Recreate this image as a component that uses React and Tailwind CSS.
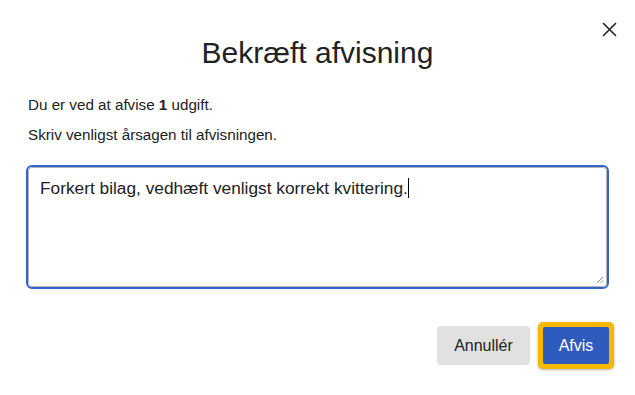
export default function App() {
  return (
    <div className="relative w-[635px] h-[395px] bg-white text-[#222] font-['Liberation_Sans',Arial,sans-serif]">
      <button className="absolute right-[18px] top-[21px] w-[16px] h-[16px] flex items-center justify-center">
        <svg width="15" height="15" viewBox="0 0 15 15">
          <path d="M1.5 1.5 L13.5 13.5 M13.5 1.5 L1.5 13.5" stroke="#222" strokeWidth="1.6" strokeLinecap="round" />
        </svg>
      </button>

      <h1 className="pt-[36px] text-center text-[30px] leading-[34px]">Bekræft afvisning</h1>

      <div className="px-[28px] mt-[20px] text-[15.2px] leading-[30px]">
        <p>Du er ved at afvise <b>1</b> udgift.</p>
        <p>Skriv venligst årsagen til afvisningen.</p>
      </div>

      <div className="mx-[26px] mt-[15px] h-[124px] rounded-[6px] border-2 border-[#3563c9]">
        <div className="relative h-full rounded-[4px] border border-[#b5b5b5] px-[11px] py-[9px] text-[17.3px] leading-[22px]">
          <span>Forkert bilag, vedhæft venligst korrekt kvittering.</span>
          <span className="inline-block w-px h-[20px] bg-black align-[-4px]" />
          <svg className="absolute right-[2px] bottom-[2px]" width="8" height="8" viewBox="0 0 8 8">
            <path d="M7 1 L1 7 M7 4.5 L4.5 7" stroke="#888" strokeWidth="1" />
          </svg>
        </div>
      </div>

      <div className="flex justify-end items-center gap-[8px] mt-[33px] pr-[21px]">
        <button className="w-[93px] h-[39px] rounded-[4px] bg-[#e1e1e1] text-[16px] text-[#222]">Annullér</button>
        <div className="rounded-[5px] bg-[#f6b800] p-[5px] shadow-[0_1px_3px_rgba(0,0,0,0.3)]">
          <button className="block w-[66px] h-[37px] rounded-[2px] bg-[#2f5bbf] text-[16px] text-white">Afvis</button>
        </div>
      </div>
    </div>
  );
}
